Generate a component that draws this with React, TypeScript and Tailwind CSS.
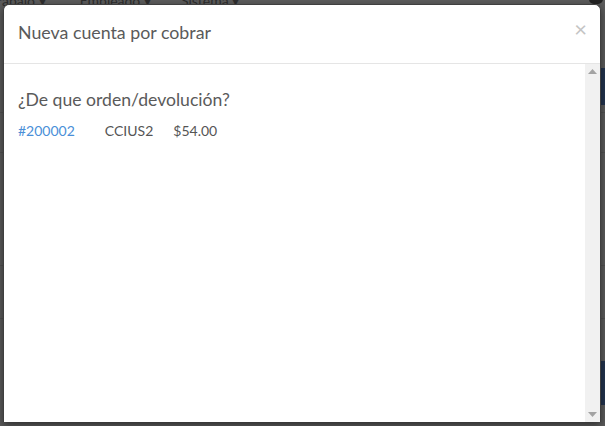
export default function App() {
  return (
    <div className="relative w-[605px] h-[426px] overflow-hidden bg-[#5c5c5c] font-['Lato','Liberation_Sans',sans-serif]">
      {/* dimmed page behind the modal */}
      <div className="flex -mt-[10px] text-[14px] text-[#2e2e2e]">
        <span className="-ml-[3px]">rabajo ▾</span>
        <span className="ml-[34px]">Empleado ▾</span>
        <span className="ml-[30px]">Sistema ▾</span>
      </div>
      <div className="absolute right-0 top-[68px] w-[10px] h-[37px] bg-[#23344f]" />
      <div className="absolute right-0 top-[361px] w-[10px] h-[44px] bg-[#23344f]" />
      <div className="absolute left-0 right-0 top-[112px] h-px bg-[#525252]" />
      <div className="absolute left-0 right-0 top-[152px] h-px bg-[#525252]" />
      <div className="absolute left-0 right-0 top-[265px] h-px bg-[#525252]" />
      <div className="absolute left-0 right-0 top-[318px] h-px bg-[#525252]" />
      <div className="absolute right-[2px] -top-[6px] w-[14px] h-[10px] rounded-full bg-[#222]" />

      {/* modal */}
      <div className="absolute left-[3px] top-[4px] w-[598px] h-[418px] flex flex-col bg-white rounded-t-[6px] border border-[#3f3f3f] border-b-0 shadow-[0_3px_9px_rgba(0,0,0,0.5)]">
        <div className="flex items-center justify-between h-[59px] px-[14px] pb-[2px] border-b border-[#e5e5e5] shrink-0">
          <h4 className="text-[17.8px] text-[#5a5a5a] leading-none">Nueva cuenta por cobrar</h4>
          <button className="text-[22px] font-normal leading-none text-[#c4c4c4] -mt-[9px] -mr-[1px]">×</button>
        </div>
        <div className="flex flex-1 min-h-0">
          <div className="flex-1 px-[14px] pt-[25px]">
            <h4 className="text-[17.6px] leading-[22px] text-[#5a5a5a]">¿De que orden/devolución?</h4>
            <div className="flex mt-[10px] text-[14px] leading-[20px] text-[#555]">
              <a className="text-[#4a8fd8]">#200002</a>
              <span className="ml-[30px]">CCIUS2</span>
              <span className="ml-[20px]">$54.00</span>
            </div>
          </div>
          <div className="w-[15px] bg-[#f1f1f1] flex flex-col items-center justify-between py-[5px]">
            <svg width="9" height="5" viewBox="0 0 9 5"><path d="M0 5 L4.5 0 L9 5 Z" fill="#a3a3a3" /></svg>
            <svg width="9" height="5" viewBox="0 0 9 5"><path d="M0 0 L9 0 L4.5 5 Z" fill="#a3a3a3" /></svg>
          </div>
        </div>
      </div>
    </div>
  );
}
